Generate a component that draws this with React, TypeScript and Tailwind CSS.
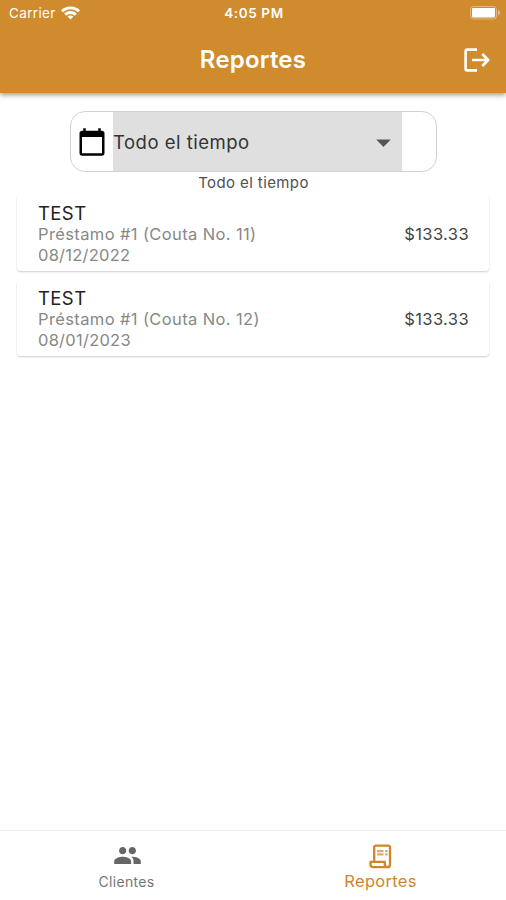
import { MdArrowDropDown, MdCalendarToday, MdPeople } from "react-icons/md";

const payments = [
  { name: "TEST", detail: "Préstamo #1 (Couta No. 11)", date: "08/12/2022", amount: "$133.33" },
  { name: "TEST", detail: "Préstamo #1 (Couta No. 12)", date: "08/01/2023", amount: "$133.33" },
];

const StatusBar = () => (
  <div className="grid grid-cols-3 items-center h-[26px] pl-[9px] pr-[5px] text-white">
    <div className="flex items-center gap-[5px]">
      <span className="text-[13.5px] tracking-[0.35px]">Carrier</span>
      <svg width="19" height="14" viewBox="0 0 19 14" fill="none" stroke="white" strokeWidth="2.9">
        <path d="M1 5.2C5.7 0.8 13.3 0.8 18 5.2" />
        <path d="M4.2 8.6C7.2 5.8 11.8 5.8 14.8 8.6" />
        <path d="M9.5 13.5L6.6 10.6C8.2 9.1 10.8 9.1 12.4 10.6Z" fill="white" stroke="none" />
      </svg>
    </div>
    <span className="-ml-[2px] text-center text-[13.5px] font-semibold tracking-[0.6px]">4:05 PM</span>
    <svg className="justify-self-end" width="31" height="14" viewBox="0 0 31 14">
      <rect x="0.5" y="0.5" width="26" height="12.5" rx="3" fill="none" stroke="#e5b682" />
      <rect x="2" y="2" width="23" height="9.5" rx="1" fill="white" />
      <path d="M28 4C30.8 5 30.8 8.5 28 9.5Z" fill="#e5b682" />
    </svg>
  </div>
);

const LogoutIcon = () => (
  <svg
    width="26"
    height="24"
    viewBox="0 0 26 24"
    fill="none"
    stroke="white"
    strokeWidth="2.6"
    strokeLinejoin="round"
  >
    <path d="M13 1.6H3.2Q1.6 1.6 1.6 3.2V20.8Q1.6 22.4 3.2 22.4H13" />
    <path d="M8 12H24M18.3 6L24.2 12L18.3 18" />
  </svg>
);

const ReceiptIcon = () => (
  <svg width="23" height="25" viewBox="0 0 23 25" fill="none" stroke="currentColor" strokeWidth="2.3" strokeLinejoin="round">
    <path d="M5.2 17V3.2Q5.2 1.6 6.8 1.6H19.4Q21 1.6 21 3.2V20.4Q21 23.2 18.3 23.2H4.2Q1.5 23.2 1.5 20.4V17.8H15.8V20.6Q15.8 23.2 18.3 23.2" />
    <path d="M8 7.2H14.5M8 10.4H14.5M16.2 7.2H18.6M16.2 10.4H18.6" strokeWidth="2.2" opacity="0.7" />
  </svg>
);

const App = () => {
  return (
    <div className="flex flex-col h-[900px] w-[506px] overflow-hidden bg-white font-['Inter','Liberation_Sans',sans-serif]">
      {/* Header */}
      <header className="h-[93px] shrink-0 bg-[#d08b2d] shadow-[0_2px_5px_rgba(0,0,0,0.4)]">
        <StatusBar />
        <div className="grid grid-cols-3 items-center h-[67px] px-[15.5px] text-white">
          <h1 className="col-start-2 text-center text-[24px] font-semibold leading-none tracking-[0.2px]">Reportes</h1>
          <div className="justify-self-end">
            <LogoutIcon />
          </div>
        </div>
      </header>

      <main className="flex-1 flex flex-col items-center pt-[18px]">
        {/* Period filter */}
        <div className="flex h-[61px] w-[367px] ml-[1px] rounded-[15px] border border-[#d2d2d2] overflow-hidden">
          <div className="flex items-center w-[42px] pt-[1px] pl-[6px]">
            <MdCalendarToday size={30} color="black" />
          </div>
          <div className="flex items-center justify-between w-[289px] pt-[2px] pr-[1px] bg-[#dfdfdf] text-[#333]">
            <span className="text-[18.5px] tracking-[0.5px]">Todo el tiempo</span>
            <MdArrowDropDown size={35} color="#555" />
          </div>
        </div>
        <p className="mt-[1px] ml-[1px] text-[15px] leading-[20px] tracking-[0.4px] text-[#505050]">Todo el tiempo</p>

        {/* Payments */}
        <div className="flex flex-col gap-[9px] w-[472px] mt-[2px]">
          {payments.map((payment) => (
            <div
              key={payment.date}
              className="flex items-center justify-between h-[76px] pt-[3px] pl-[21px] pr-[20px] rounded-[4px] bg-white shadow-[0_1px_2px_rgba(0,0,0,0.2)]"
            >
              <div className="text-[16.5px] leading-[21px] text-[#888]">
                <p className="text-[18.5px] tracking-[0.4px] text-[#222]">{payment.name}</p>
                <p className="tracking-[0.38px]">{payment.detail}</p>
                <p className="tracking-[0.25px]">{payment.date}</p>
              </div>
              <span className="text-[16.5px] tracking-[0.4px] text-[#444]">{payment.amount}</span>
            </div>
          ))}
        </div>
      </main>

      {/* Bottom tabs */}
      <nav className="grid grid-cols-2 h-[70px] shrink-0 border-t border-[#f0f0f0]">
        <div className="flex flex-col items-center pt-[10px] text-[#666]">
          <MdPeople className="ml-px" size={29} />
          <span className="mt-[2px] text-[14px] leading-[20px] tracking-[0.35px] text-[#777]">Clientes</span>
        </div>
        <div className="flex flex-col items-center pt-[13px] pl-[2px] text-[#d0852d]">
          <ReceiptIcon />
          <span className="mt-[2px] text-[16.5px] leading-[20px] tracking-[0.3px]">Reportes</span>
        </div>
      </nav>
    </div>
  );
};

export default App;
